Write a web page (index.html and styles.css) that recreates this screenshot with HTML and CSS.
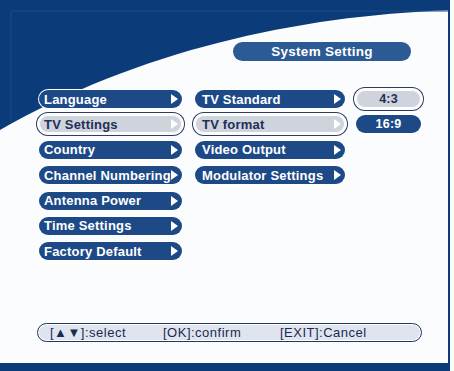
FILE: index.html
```html
<!DOCTYPE html>
<html lang="en">

<head>
    <meta charset="UTF-8">
    <meta name="viewport" content="width=device-width, initial-scale=1.0">
    <title>System Setting</title>
    <link rel="stylesheet" href="styles.css">
</head>

<body>
    <div class="screen">
        <svg class="backdrop" width="454" height="140" viewBox="0 0 454 140">
            <path d="M0,0 L454,0 L454,10 C300,15 140,50 0,130 Z" fill="#0c3b7a" />
            <path d="M11,122 L11,11 L448,11" fill="none" stroke="#1d4d8c" stroke-width="1" />
        </svg>
        <div class="top-band"></div>
        <div class="title-row">
            <div class="title">System Setting</div>
        </div>
        <div class="menus">
            <ul class="menu menu-main">
                <li class="arrow">Language</li>
                <li class="arrow active">TV Settings</li>
                <li class="arrow">Country</li>
                <li class="arrow">Channel Numbering</li>
                <li class="arrow">Antenna Power</li>
                <li class="arrow">Time Settings</li>
                <li class="arrow">Factory Default</li>
            </ul>
            <ul class="menu menu-sub">
                <li class="arrow">TV Standard</li>
                <li class="arrow active">TV format</li>
                <li class="arrow">Video Output</li>
                <li class="arrow">Modulator Settings</li>
            </ul>
            <ul class="menu menu-value">
                <li class="active">4:3</li>
                <li>16:9</li>
            </ul>
        </div>
        <div class="help">
            <span class="help-select">[▲▼]:select</span>
            <span class="help-ok">[OK]:confirm</span>
            <span>[EXIT]:Cancel</span>
        </div>
        <div class="bottom-band"></div>
    </div>
</body>

</html>
```

FILE: styles.css
```css
body {
    margin: 0;
    background-color: #fbfcfd;
    font-family: "Liberation Sans", Arial, sans-serif;
}

ul {
    margin: 0;
    padding: 0;
    list-style: none;
}

.screen {
    position: relative;
    display: flex;
    flex-direction: column;
    width: 448px;
    height: 371px;
    border-right: 2px solid #0c3b7a;
    overflow: hidden;
}

.backdrop {
    position: absolute;
    left: 0;
    top: 0;
}

.top-band {
    height: 10px;
    flex: 0 0 10px;
}

.title-row,
.menus,
.help {
    position: relative;
}

.title-row {
    display: flex;
    margin-top: 32px;
    padding-left: 233px;
}

.title {
    width: 178px;
    height: 19px;
    line-height: 19px;
    border-radius: 10px;
    background-color: #2b5a94;
    color: #fff;
    font-weight: bold;
    font-size: 13.5px;
    letter-spacing: 0.3px;
    text-align: center;
}

.menus {
    display: flex;
    align-items: flex-start;
    margin-top: 29px;
    padding-left: 39px;
}

.menu {
    display: flex;
    flex-direction: column;
    gap: 7.4px;
}

.menu li {
    display: flex;
    align-items: center;
    height: 18px;
    border-radius: 9px;
    background-color: #1d4a87;
    box-shadow: 0 0 0 1px #fff;
    color: #fff;
    font-weight: bold;
    font-size: 13px;
    letter-spacing: 0.2px;
    white-space: nowrap;
}

.menu .active {
    background-color: #cfd4dc;
    color: #1e2f55;
    box-shadow: inset 0 0 0 1px #fff, 0 0 0 2px #fdfdfd, 0 0 0 3px #2a3c62;
}

.arrow::after {
    content: "";
    margin-left: auto;
    margin-right: 4px;
    border-left: 7px solid #fff;
    border-top: 5px solid transparent;
    border-bottom: 5px solid transparent;
}

.menu-main {
    width: 143px;
}

.menu-main li {
    padding-left: 5px;
}

.menu-sub {
    width: 150px;
    margin-left: 13px;
}

.menu-sub li {
    padding-left: 7px;
}

.menu-value {
    width: 65px;
    margin-left: 11px;
}

.menu-value li {
    justify-content: center;
    font-size: 12.5px;
}

.help {
    display: flex;
    align-items: center;
    margin-top: auto;
    margin-left: 37px;
    margin-bottom: 21px;
    width: 371px;
    height: 17px;
    padding-left: 12px;
    border: 1px solid #24375e;
    border-radius: 10px;
    background-color: #dfe4ee;
    box-shadow: inset 0 0 0 1px #fff;
    color: #1a2a50;
    font-size: 13px;
    letter-spacing: 0.5px;
    white-space: nowrap;
}

.help-select {
    width: 113px;
}

.help-ok {
    width: 117px;
}

.bottom-band {
    flex: 0 0 8px;
    background-color: #0c3b7a;
}
```
